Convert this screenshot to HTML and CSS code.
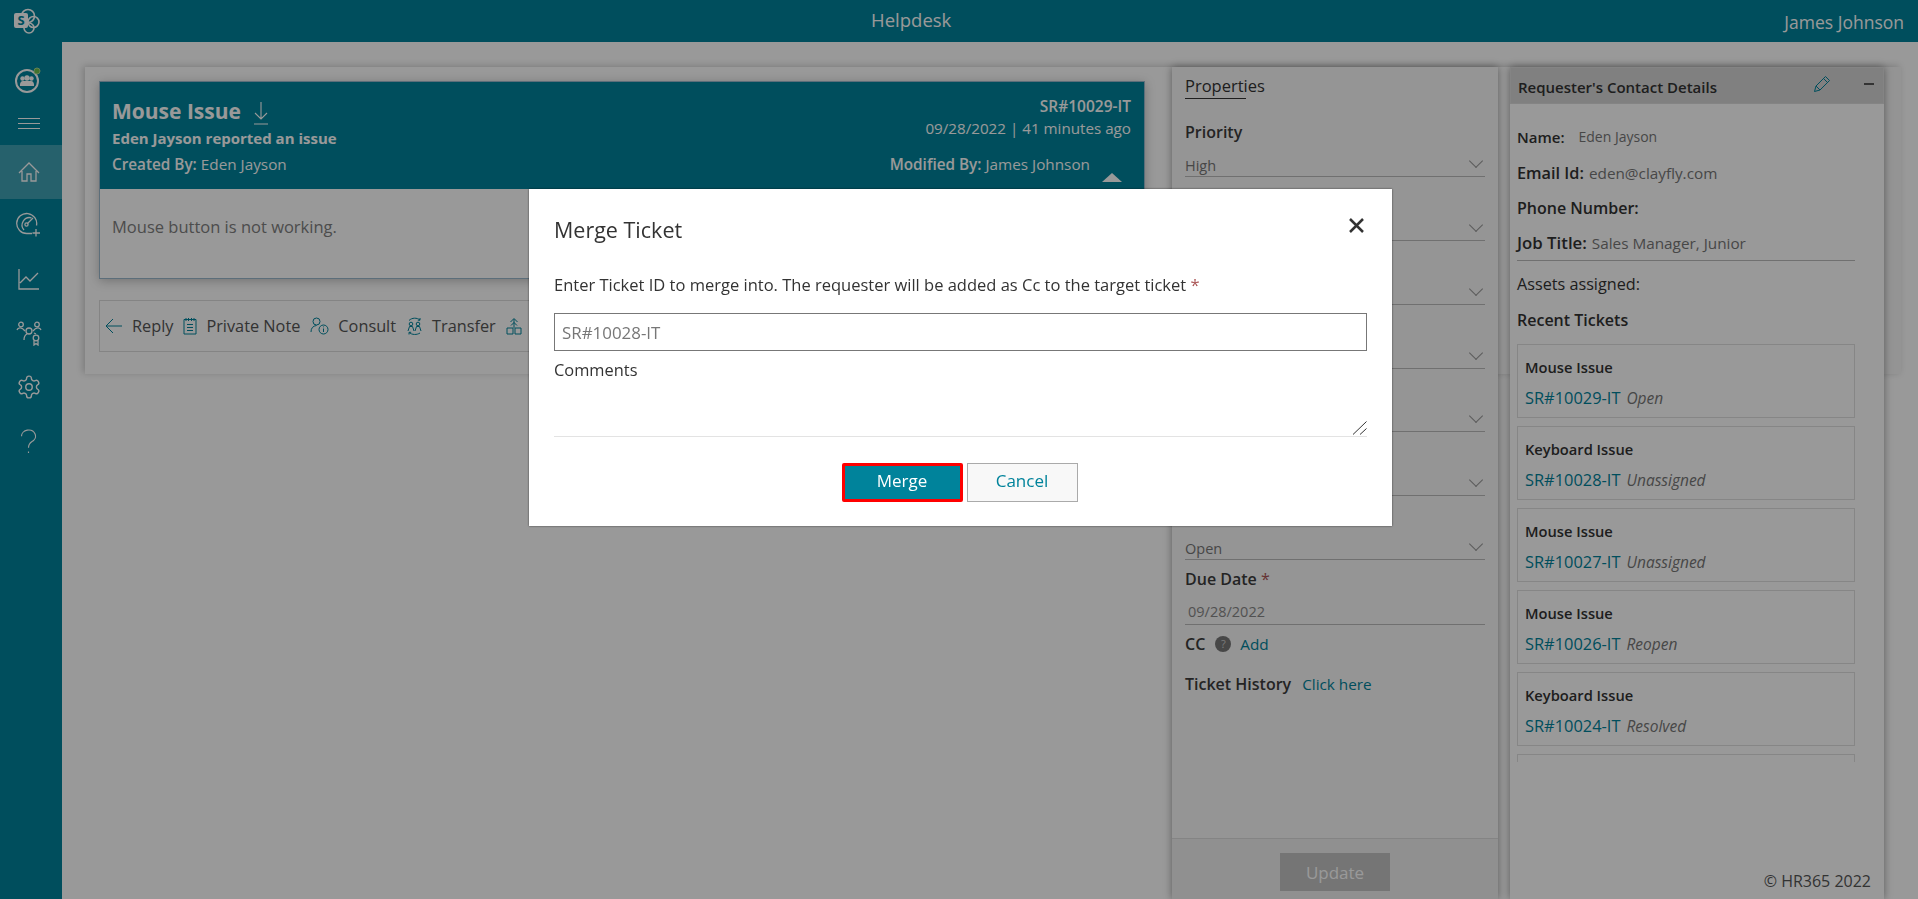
FILE: index.html
```html
<!DOCTYPE html>
<html lang="en">
<head>
<meta charset="utf-8">
<title>Helpdesk</title>
<link rel="stylesheet" href="styles.css">
</head>
<body>
<div class="app">
  <nav class="sidebar">
    <div class="logo-cell">
      <svg class="logo" viewBox="0 0 26 26" width="26" height="26"><g fill="none" stroke="#fff" stroke-width="1.6"><circle cx="14" cy="8" r="6.5"/><circle cx="19.5" cy="14" r="5.5"/><circle cx="15" cy="20" r="5"/></g><rect x="0" y="5" width="14" height="15" rx="2" fill="#fff"/><text x="7" y="17" text-anchor="middle" class="logo-s">S</text></svg>
    </div>
    <div class="team-cell">
      <svg viewBox="0 0 28 28" width="28" height="28"><circle cx="13" cy="15" r="11" fill="none" stroke="#fff" stroke-width="2"/><g fill="#fff"><circle cx="8.5" cy="12.500" r="2.2"/><circle cx="17.500" cy="12.500" r="2.2"/><circle cx="13" cy="12" r="2.7"/><path d="M6 20c-.5-3 1-5 3-5h8c2 0 3.500 2 3 5z"/></g><circle cx="23" cy="5" r="3" fill="#6fbf4a" stroke="#a9d58e"/></svg>
    </div>
    <div class="menu-cell"><span class="bars"></span></div>
    <a class="nav-item active"><svg viewBox="0 0 24 24" width="24" height="24"><path d="M2 13 12 3l10 10M5 11v10h5v-7h4v7h5V11"/></svg></a>
    <a class="nav-item"><svg viewBox="0 0 26 26" width="26" height="26"><path d="M20.500 13.500A10 10 0 1 0 11 21.500h5"/><path d="M15.500 5.800A7.500 7.500 0 0 0 8 18"/><path d="M11 12l6-6"/><circle cx="10.500" cy="12.500" r="1.600"/><path d="M20 17v7.500M16.500 21h7.500"/></svg></a>
    <a class="nav-item"><svg viewBox="0 0 24 24" width="24" height="24"><path d="M2 2v20h20M3 16l6-6 4 4 8-8"/></svg></a>
    <a class="nav-item"><svg viewBox="0 0 26 26" width="26" height="26"><circle cx="5" cy="4.500" r="2.300"/><circle cx="21" cy="4.500" r="2.300"/><circle cx="13" cy="11" r="3"/><path d="M1 10c1-3 5-3 8 1M25 10c-1-3-5-3-8 1M8 20c0-3 1-5 3-6M18 13l2 1"/><circle cx="20" cy="18" r="2.800"/><path d="M18 20.500V25l2-1.500 2 1.500v-4.500"/></svg></a>
    <a class="nav-item"><svg viewBox="0 0 24 24" width="26" height="26"><path d="M12.220 2h-.44a2 2 0 0 0-2 2v.18a2 2 0 0 1-1 1.730l-.43.25a2 2 0 0 1-2 0l-.15-.08a2 2 0 0 0-2.730.73l-.22.38a2 2 0 0 0 .73 2.730l.15.1a2 2 0 0 1 1 1.720v.51a2 2 0 0 1-1 1.740l-.15.09a2 2 0 0 0-.73 2.730l.22.38a2 2 0 0 0 2.730.73l.15-.08a2 2 0 0 1 2 0l.43.25a2 2 0 0 1 1 1.730V20a2 2 0 0 0 2 2h.44a2 2 0 0 0 2-2v-.18a2 2 0 0 1 1-1.730l.43-.25a2 2 0 0 1 2 0l.15.08a2 2 0 0 0 2.730-.73l.22-.39a2 2 0 0 0-.73-2.730l-.15-.08a2 2 0 0 1-1-1.740v-.5a2 2 0 0 1 1-1.740l.15-.09a2 2 0 0 0 .73-2.730l-.22-.38a2 2 0 0 0-2.730-.73l-.15.08a2 2 0 0 1-2 0l-.43-.25a2 2 0 0 1-1-1.730V4a2 2 0 0 0-2-2z"/><circle cx="12" cy="12" r="3"/></svg></a>
    <a class="nav-item"><svg viewBox="0 0 24 28" width="21" height="25"><path d="M4 8a8 7 0 1 1 12 6c-3 2-4 3.500-4 7M12 25.500v1.500"/></svg></a>
  </nav>

  <header class="topbar">
    <span class="app-title">Helpdesk</span>
    <span class="user-name">James Johnson</span>
  </header>

  <main class="main">
    <section class="ticket-panel">
      <div class="ticket-card">
        <div class="ticket-head">
          <div class="head-left">
            <h1 class="ticket-title">Mouse Issue <svg class="dl-icon" viewBox="0 0 16 24" width="16" height="24"><path d="M8 1v17M2 12l6 6 6-6M1 23h14"/></svg></h1>
            <div class="reported">Eden Jayson reported an issue</div>
            <div class="created"><b>Created By:</b> Eden Jayson</div>
          </div>
          <div class="head-right">
            <div class="sr-no">SR#10029-IT</div>
            <div class="stamp">09/28/2022 | 41 minutes ago</div>
            <div class="modified"><b>Modified By:</b> James Johnson</div>
          </div>
          <span class="collapse-tri"></span>
        </div>
        <div class="ticket-body">Mouse button is not working.</div>
      </div>
      <div class="toolbar">
        <span class="tool"><svg viewBox="0 0 18 16" width="18" height="16"><path d="M17 8H1M8 1 1 8l7 7"/></svg>Reply</span>
        <span class="tool"><svg viewBox="0 0 14 18" width="14" height="18"><path d="M1 2.500h12V17H1zM3 1v3M5.500 1v3M8.500 1v3M11 1v3M4 7.500h6M4 10.500h6M4 13.500h6"/></svg>Private Note</span>
        <span class="tool"><svg viewBox="0 0 19 18" width="19" height="18"><circle cx="6.500" cy="4.500" r="3.500"/><path d="M1 15c0-4 2-6 5.500-6.500"/><circle cx="13.500" cy="12.500" r="4.500"/><path d="M13.500 11.500v3.500M13.500 9.500v.8"/></svg>Consult</span>
        <span class="tool"><svg viewBox="0 0 17 18" width="17" height="18"><circle cx="5" cy="7" r="1.800"/><circle cx="12" cy="7" r="1.800"/><path d="M2 14l1.500-4.500h3L8 14M9 14l1.500-4.500h3L15 14M3 3.500C6 .5 11 .5 14 3M14 1v2.200h-2.200M14 16c-3 2-8 2-11-.5M3 17.500v-2.200h2.200"/></svg>Transfer</span>
        <span class="tool"><svg viewBox="0 0 16 18" width="16" height="18"><path d="M1 11h6v6H1zM9 11h6v6H9zM8 11V2M4.500 5 8 1.500 11.500 5M5 8.500l3-3 3 3"/></svg></span>
      </div>
    </section>

    <aside class="props">
      <div class="props-head"><span class="props-tab">Properties</span></div>
      <div class="field"><div class="field-label">Priority</div><div class="select">High</div></div>
      <div class="field"><div class="select"></div></div>
      <div class="field"><div class="select"></div></div>
      <div class="field"><div class="select"></div></div>
      <div class="field"><div class="select"></div></div>
      <div class="field"><div class="select"></div></div>
      <div class="field"><div class="select">Open</div></div>
      <div class="field due"><div class="field-label">Due Date <span class="req">*</span></div><div class="date-val">09/28/2022</div></div>
      <div class="cc-row"><span class="field-label">CC</span><span class="q-badge">?</span><a class="link">Add</a></div>
      <div class="hist-row"><span class="field-label">Ticket History</span><a class="link">Click here</a></div>
      <div class="props-foot"><button class="update-btn">Update</button></div>
    </aside>

    <aside class="contact">
      <div class="contact-head">
        <span class="contact-title">Requester's Contact Details</span>
        <svg class="pencil" viewBox="0 0 18 18" width="18" height="18"><path d="M1.500 16.500 3 11 12.500 1.500 16.500 5.500 7 15zM3 11l4 4M10.500 3.500l4 4"/></svg>
        <span class="minus"></span>
      </div>
      <div class="contact-body">
        <div class="info name-row"><b>Name:</b><span class="val">Eden Jayson</span></div>
        <div class="info email-row"><b>Email Id:</b><span class="val">eden@clayfly.com</span></div>
        <div class="info"><b>Phone Number:</b></div>
        <div class="info job"><b>Job Title:</b><span class="val">Sales Manager, Junior</span></div>
        <div class="assets">Assets assigned:</div>
        <div class="recent">Recent Tickets</div>
        <div class="ticket-list">
          <div class="mini"><div class="mini-title">Mouse Issue</div><div class="mini-line"><a class="link">SR#10029-IT</a><i>Open</i></div></div>
          <div class="mini"><div class="mini-title">Keyboard Issue</div><div class="mini-line"><a class="link">SR#10028-IT</a><i>Unassigned</i></div></div>
          <div class="mini"><div class="mini-title">Mouse Issue</div><div class="mini-line"><a class="link">SR#10027-IT</a><i>Unassigned</i></div></div>
          <div class="mini"><div class="mini-title">Mouse Issue</div><div class="mini-line"><a class="link">SR#10026-IT</a><i>Reopen</i></div></div>
          <div class="mini"><div class="mini-title">Keyboard Issue</div><div class="mini-line"><a class="link">SR#10024-IT</a><i>Resolved</i></div></div>
          <div class="mini"></div>
        </div>
      </div>
      <div class="copyright">© HR365 2022</div>
    </aside>
  </main>
</div>

<div class="overlay"></div>
<div class="modal">
  <div class="modal-head">
    <h2 class="modal-title">Merge Ticket</h2>
    <svg class="close" viewBox="0 0 17 17" width="17" height="17"><path d="M2 2l13 13M15 2 2 15"/></svg>
  </div>
  <label class="modal-desc">Enter Ticket ID to merge into. The requester will be added as Cc to the target ticket <span class="req">*</span></label>
  <input class="modal-input" type="text" placeholder="SR#10028-IT">
  <label class="modal-label">Comments</label>
  <div class="area-wrap">
    <textarea class="modal-area"></textarea>
    <svg class="grip" viewBox="0 0 15 14" width="15" height="14"><path d="M14.500 .5 1 13.500M14.500 7.500 8 13.500"/></svg>
  </div>
  <div class="modal-actions">
    <button class="btn-merge">Merge</button>
    <button class="btn-cancel">Cancel</button>
  </div>
</div>
</body>
</html>
```
FILE: styles.css
```css
* { box-sizing: border-box; }
html, body { margin: 0; height: 100%; overflow: hidden; }
body { font-family: "Open Sans", "Noto Sans", sans-serif; font-size: 15px; color: #333; background: #fff; }
a { text-decoration: none; }
h1, h2 { margin: 0; }

.app { display: grid; grid-template-columns: 62px 1fr; grid-template-rows: 42px 1fr; height: 899px; }

.sidebar { grid-row: 1 / 3; background: #00839b; display: flex; flex-direction: column; }
.logo-cell { height: 42px; display: flex; padding: 8px 0 0 14px; }
.logo-s { font-family: "Open Sans", sans-serif; font-weight: 700; font-size: 13px; fill: #00839b; }
.team-cell { padding: 24px 0 0 14px; height: 66px; }
.menu-cell { height: 37px; padding: 10px 0 0 18px; }
.bars { display: block; width: 22px; height: 11px; border-top: 1px solid #fff; border-bottom: 1px solid #fff; }
.bars::after { content: ""; display: block; height: 1px; margin-top: 4px; background: #fff; }
.nav-item { height: 54px; display: flex; align-items: center; justify-content: center; padding-right: 5px; padding-bottom: 2px; }
.nav-item.active { background: rgba(255,255,255,.25); padding-bottom: 0; }
.nav-item svg { fill: none; stroke: #fff; stroke-width: 1.300; }

.topbar { background: #00839b; display: flex; align-items: center; padding-right: 14px; color: #fff; }
.app-title { font-size: 18.500px; flex: 1; text-align: center; margin-top: -3px; padding-right: 24px; }
.user-name { font-size: 17.500px; margin-top: 1px; }

.main { overflow: hidden; padding: 25px 17px 0 23px; display: grid; grid-template-columns: 1087px 338px 374px 17px; grid-template-rows: 832px; }

.ticket-panel { grid-area: 1 / 1 / 2 / 5; height: 307px; padding: 14px 0 0 14px; background: linear-gradient(to left, #f7f7f7 17px, #fff 17px); box-shadow: -2px -1px 7px rgba(0,0,0,.2); }
.ticket-card { width: 1046px; height: 198px; border: 1px solid #9ab8cc; box-shadow: 0 2px 10px rgba(0,0,0,.25); background: #fff; }
.ticket-head { position: relative; height: 107px; background: #00839b; color: #fff; display: flex; justify-content: space-between; padding: 13px 13px 0 12px; }
.ticket-title { font-size: 21px; font-weight: 700; line-height: 32px; display: flex; align-items: center; gap: 12px; }
.dl-icon { fill: none; stroke: #fff; stroke-width: 1.100; margin-top: 4px; }
.reported { font-size: 15px; font-weight: 700; line-height: 22px; }
.created { font-size: 15.300px; line-height: 22px; margin-top: 4px; }
.created b, .modified b { font-weight: 600; }
.head-right { text-align: right; }
.sr-no { font-size: 15.500px; font-weight: 600; line-height: 22px; }
.stamp { font-size: 15.200px; line-height: 22px; }
.modified { font-size: 15.300px; line-height: 22px; margin-top: 14px; padding-right: 41px; }
.collapse-tri { position: absolute; right: 22px; bottom: 7px; width: 0; height: 0; border-left: 10px solid transparent; border-right: 10px solid transparent; border-bottom: 9px solid #fff; }
.ticket-body { padding: 26px 12px; font-size: 16.500px; line-height: 24px; color: #808080; }

.toolbar { width: 1046px; height: 52px; margin-top: 21px; border: 1px solid #dcdcdc; display: flex; align-items: center; padding-left: 5px; color: #555; font-size: 16.300px; gap: 10px; }
.tool { display: flex; align-items: center; gap: 9px; }
.tool svg { fill: none; stroke: #00839b; stroke-width: 1; }

.props { grid-column: 2; grid-row: 1; margin-right: 12px; background: #f8f8f8; box-shadow: 0 0 8px rgba(0,0,0,.4); display: flex; flex-direction: column; padding: 0 13px; height: 832px; }
.props-head { height: 46.500px; padding-top: 8px; flex: none; }
.props-tab { display: inline-block; font-size: 16.500px; font-weight: 500; color: #333; line-height: 22px; position: relative; }
.props-tab::after { content: ""; position: absolute; left: 0; top: 23px; width: 61px; height: 1px; background: #333; }
.field { height: 63.800px; display: flex; flex-direction: column; justify-content: flex-end; flex: none; border-bottom: 1px solid #bbb; }
.field-label { font-size: 16px; font-weight: 600; color: #3c3c3c; }
.field > .field-label { line-height: 22px; margin-bottom: 9px; }
.select { height: 24px; padding-top: 4px; line-height: 20px; font-size: 14.500px; color: #777; position: relative; }
.select::after { content: ""; position: absolute; right: 4px; top: 4px; width: 9px; height: 9px; border-right: 1px solid #999; border-bottom: 1px solid #999; transform: rotate(45deg); }
.field.due { height: 64.800px; }
.field.due > .field-label { margin-bottom: 10px; }
.date-val { height: 24px; padding: 1px 0 0 3px; line-height: 22px; font-size: 14.500px; color: #888; }
.req { color: #a55; font-weight: 400; }
.cc-row { display: flex; align-items: center; height: 22px; margin-top: 8px; flex: none; }
.q-badge { width: 16px; height: 16px; border-radius: 50%; background: #777; color: #ccc; font-size: 11px; text-align: center; line-height: 16px; margin: 0 9px 0 10px; }
.link { color: #00839b; font-size: 15.300px; }
.hist-row { display: flex; align-items: center; gap: 11px; height: 22px; margin-top: 18px; flex: none; }
.props-foot { margin: auto -13px 0; height: 61px; flex: none; background: #f0f0f0; border-top: 1px solid #ddd; display: flex; justify-content: center; padding-top: 14px; }
.update-btn { width: 110px; height: 38px; border: 0; background: #c3c3c3; color: #fff; font: inherit; font-size: 17px; }

.contact { grid-column: 3; grid-row: 1; height: 832px; background: #fff; box-shadow: 0 0 8px rgba(0,0,0,.4); position: relative; }
.contact-head { height: 37px; background: #d5d5d5; border: 1px solid #ddd; display: flex; align-items: center; padding: 0 9px 0 7px; }
.contact-title { font-size: 15px; font-weight: 600; flex: 1; color: #333; margin-top: 2px; }
.pencil { fill: none; stroke: #00839b; stroke-width: 1; margin-right: 33px; margin-top: -4px; }
.minus { width: 10px; height: 2px; background: #555; margin-top: -4px; }
.contact-body { padding: 15px 29px 0 7px; }
.info { height: 35.500px; display: flex; align-items: center; font-size: 15.300px; }
.info b { font-weight: 600; font-size: 16px; color: #333; }
.info .val { color: #777; margin-left: 5px; }
.name-row b { font-size: 15px; }
.name-row .val { margin-left: 14px; font-size: 14px; }
.email-row { padding-top: 1px; }
.email-row b { font-size: 16.300px; }
.job { border-bottom: 1px solid #bbb; }
.job b { font-size: 16.800px; }
.assets { margin-top: 12px; line-height: 22px; font-size: 16.200px; }
.recent { margin-top: 14px; line-height: 22px; font-size: 16px; font-weight: 600; }
.ticket-list { margin-top: 13px; height: 418px; overflow: hidden; display: flex; flex-direction: column; gap: 8.300px; }
.mini { border: 1px solid #e0e0e0; height: 73.800px; flex: none; padding: 11px 7px 0; }
.mini-title { font-size: 14.700px; font-weight: 600; line-height: 22px; color: #333; }
.mini-line { margin-top: 9px; line-height: 22px; font-size: 15.500px; display: flex; gap: 6px; }
.mini-line .link { font-size: 16.400px; }
.mini-line i { color: #777; }
.copyright { position: absolute; right: 13px; bottom: 7px; font-size: 16px; color: #555; }

.overlay { position: fixed; inset: 0; background: rgba(0,0,0,.4); }
.modal { position: fixed; left: 529px; top: 189px; width: 863px; height: 337px; background: #fff; padding: 26px 25px 0; display: flex; flex-direction: column; box-shadow: 0 0 2px rgba(0,0,0,.6); }
.modal-head { display: flex; justify-content: space-between; align-items: flex-start; height: 29px; flex: none; }
.modal-title { font-size: 21.500px; font-weight: 400; line-height: 29px; color: #333; }
.close { fill: none; stroke: #333; stroke-width: 2.500; margin: 2px 2px 0 0; }
.modal-desc { margin-top: 30px; line-height: 22px; font-size: 16.500px; color: #333; }
.modal-input { margin-top: 17px; height: 38px; border: 1px solid #777; font: inherit; font-size: 16.900px; padding: 0 7px; flex: none; }
.modal-input::placeholder { color: #777; opacity: 1; }
.modal-label { margin-top: 8px; line-height: 22px; font-size: 16.400px; color: #333; }
.area-wrap { position: relative; height: 56px; flex: none; }
.modal-area { display: block; width: 100%; height: 56px; border: 0; border-bottom: 1px solid #e3e3e3; resize: none; outline: none; }
.grip { position: absolute; right: 0; bottom: 2px; fill: none; stroke: #333; stroke-width: 1; }
.modal-actions { margin-top: 26px; display: flex; justify-content: center; gap: 4px; align-items: center; padding-right: 2px; }
.btn-merge { width: 121px; height: 39px; padding: 0 0 4px; border: 3px solid #f00; border-radius: 2px; background: #00839b; color: #fff; font: inherit; font-size: 17px; }
.btn-cancel { width: 111px; height: 39px; padding: 0 0 4px; border: 1px solid #aaa; background: #f8f8f8; color: #00839b; font: inherit; font-size: 17px; }
```
